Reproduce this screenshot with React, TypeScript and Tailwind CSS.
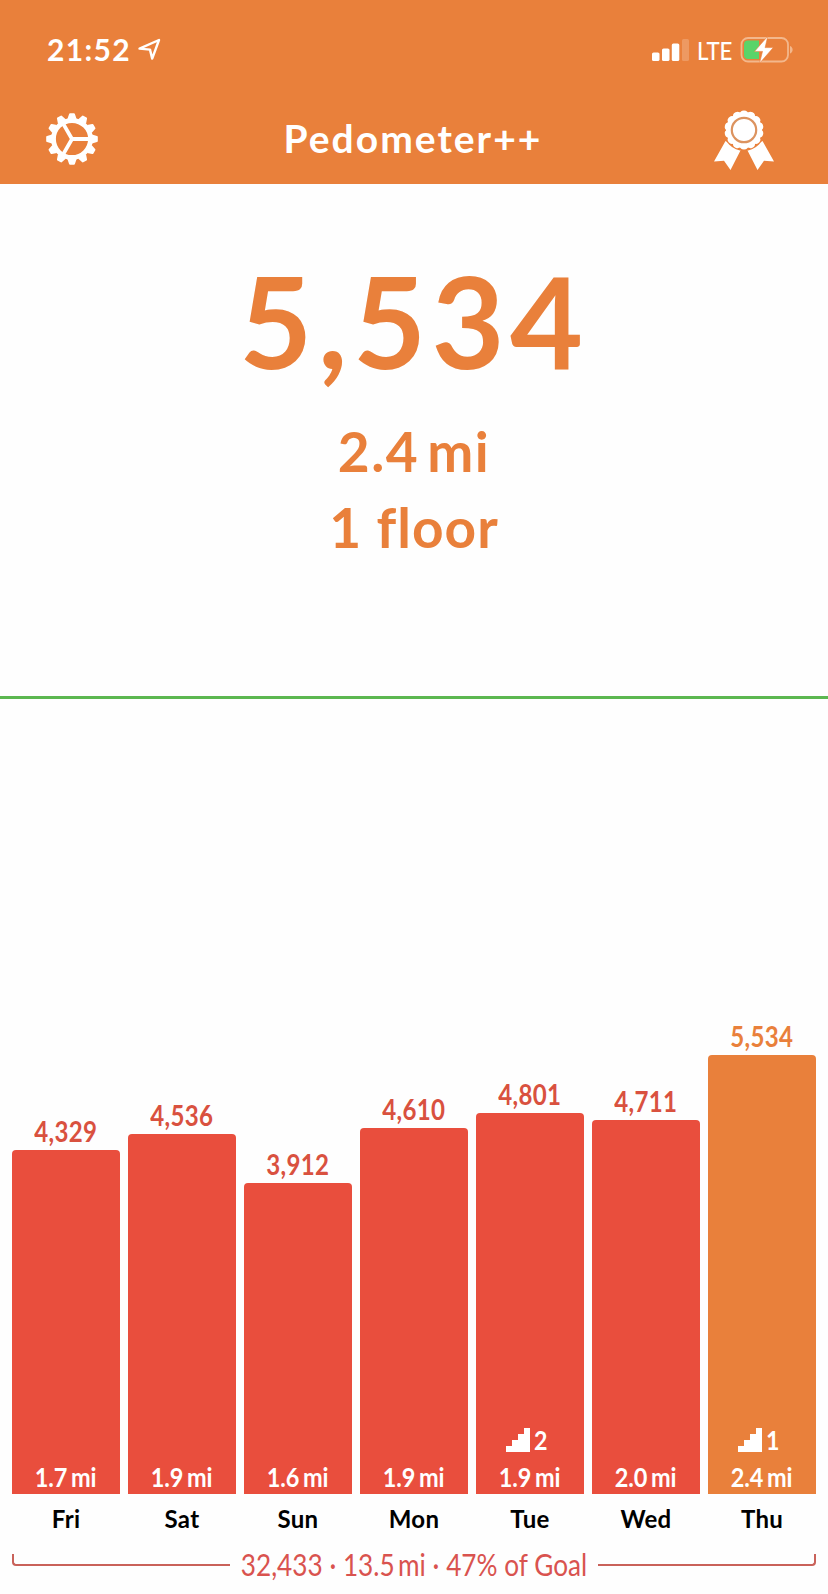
import clsx from "clsx";

type Day = {
  label: string;
  steps: number;
  miles: string;
  floors?: number;
  today?: boolean;
};

const PX_PER_STEP = 0.0794;

const days: Day[] = [
  { label: "Fri", steps: 4329, miles: "1.7" },
  { label: "Sat", steps: 4536, miles: "1.9" },
  { label: "Sun", steps: 3912, miles: "1.6" },
  { label: "Mon", steps: 4610, miles: "1.9" },
  { label: "Tue", steps: 4801, miles: "1.9", floors: 2 },
  { label: "Wed", steps: 4711, miles: "2.0" },
  { label: "Thu", steps: 5534, miles: "2.4", floors: 1, today: true },
];

const format = (value: number) => value.toLocaleString("en-US");

function LocationIcon() {
  return (
    <svg width="24" height="24" viewBox="0 0 24 24" fill="none">
      <path
        d="M2.500 10.600 22 2 15.200 20.600 13 11.600Z"
        stroke="white"
        strokeWidth="2.400"
        strokeLinejoin="round"
      />
    </svg>
  );
}

function SignalIcon() {
  return (
    <svg width="37" height="24" viewBox="0 0 37 24" fill="white">
      <rect x="0" y="14.500" width="7.500" height="8.500" rx="1.600" />
      <rect x="10" y="10.500" width="7.500" height="12.500" rx="1.600" />
      <rect x="19.800" y="5.500" width="7.500" height="17.500" rx="1.600" />
      <rect x="30" y="1" width="7" height="22" rx="1.600" opacity="0.200" />
    </svg>
  );
}

function BatteryIcon() {
  return (
    <svg width="54" height="28" viewBox="0 0 54 28" fill="none">
      <rect x="1.500" y="2" width="46.500" height="23.500" rx="6.500" stroke="#f3b78c" strokeWidth="1.800" />
      <path d="M50 10v7.500c1.600-.6 2.600-2 2.600-3.750S51.600 10.600 50 10Z" fill="#f3b78c" />
      <path d="M8 4.500H19V23H8a4 4 0 0 1-4-4V8.500a4 4 0 0 1 4-4Z" fill="#5ad469" />
      <path
        d="M27.800.2 14.500 15.400h8L19.500 27.300 33.300 11.600h-8.200Z"
        fill="white"
        stroke="#e9803b"
        strokeWidth="0.600"
      />
    </svg>
  );
}

function GearIcon() {
  return (
    <svg width="52" height="52" viewBox="-26 -26 52 52" fill="none">
      {Array.from({ length: 12 }).map((_, index) => (
        <path
          key={index}
          d="M-4.600-20-2.900-25q.2-.8 1-.8h3.800q.8 0 1 .8L4.600-20Z"
          fill="white"
          transform={`rotate(${index * 30})`}
        />
      ))}
      <circle r="18.500" stroke="white" strokeWidth="4.800" />
      <path d="M0 0H18M0 0-9-15.600M0 0-9 15.600" stroke="white" strokeWidth="3.800" />
    </svg>
  );
}

function AwardIcon() {
  return (
    <svg width="60" height="64" viewBox="0 -3 60 64">
      <path d="M11.500 31 0 51.500l10-.8 6.500 9.300L27 39.500Z" fill="white" />
      <path d="M48.500 31 60 51.500l-10-.8L43.500 60 33 39.500Z" fill="white" />
      <circle cx="30" cy="20" r="20.800" fill="#e9803b" />
      {Array.from({ length: 14 }).map((_, index) => (
        <circle
          key={index}
          cx="30"
          cy="4.500"
          r="4.100"
          fill="white"
          transform={`rotate(${(index * 360) / 14} 30 20)`}
        />
      ))}
      <circle cx="30" cy="20" r="18" fill="white" />
      <circle cx="30" cy="20" r="12.200" fill="none" stroke="#dc935f" strokeWidth="2.200" />
    </svg>
  );
}

function StairsIcon() {
  return (
    <svg width="24" height="24" viewBox="0 0 24 24" fill="white">
      <path d="M0 24v-6h6v-6h6V6h6V0h6v24Z" />
    </svg>
  );
}

function Bar({ day }: { day: Day }) {
  return (
    <div className="flex w-[108px] flex-col items-center">
      <p
        className={clsx(
          "scale-x-[0.86] pb-[3px] text-[28px] leading-8 font-bold tracking-[0.4px]",
          day.today ? "text-[#e9803b]" : "text-[#d9513f]"
        )}
      >
        {format(day.steps)}
      </p>
      <div
        className={clsx(
          "flex w-full flex-col items-center justify-end rounded-t-[4px] text-white",
          day.today ? "bg-[#e9803b]" : "bg-[#e94e3d]"
        )}
        style={{ height: day.steps * PX_PER_STEP }}
      >
        {day.floors && (
          <div className="flex items-center gap-1 pr-2 pb-[2px]">
            <StairsIcon />
            <span className="-mr-1 origin-left scale-x-[0.86] text-[27px] leading-9 font-bold">
              {day.floors}
            </span>
          </div>
        )}
        <p className="flex scale-x-[0.87] gap-1 pb-[1px] text-[27px] leading-[33px] font-bold">
          <span>{day.miles}</span>
          <span>mi</span>
        </p>
      </div>
      <p className="pt-[7px] pb-[1px] text-2xl leading-9 font-bold tracking-[0.3px] text-black">
        {day.label}
      </p>
    </div>
  );
}

export default function App() {
  return (
    <main className="flex h-[1594px] w-[828px] flex-col overflow-hidden bg-[#fefefe] font-['Lato',sans-serif]">
      <header className="h-[184px] bg-[#e9803b] text-white">
        <div className="flex items-center justify-between pt-8 pr-[34px] pl-[47px]">
          <div className="flex items-center gap-[6px]">
            <span className="pb-[2px] text-[30px] leading-[34px] font-bold tracking-[1.3px]">
              21:52
            </span>
            <LocationIcon />
          </div>
          <div className="flex items-center">
            <SignalIcon />
            <span className="w-[51px] origin-left scale-x-[0.89] pl-[9px] text-[25px] leading-9 font-medium">
              LTE
            </span>
            <BatteryIcon />
          </div>
        </div>
        <div className="flex items-center justify-between pt-[39px] pr-[54px] pl-[46px]">
          <GearIcon />
          <h1 className="pb-[2px] pl-[14px] text-[39px] leading-[60px] font-bold tracking-[2px]">
            Pedometer++
          </h1>
          <AwardIcon />
        </div>
      </header>

      <section className="flex h-[512px] flex-col items-center pt-[62px] text-[#e9803b]">
        <p className="text-[126px] leading-[150px] font-bold tracking-[5.5px]">5,534</p>
        <p className="flex gap-2 pt-[17px] text-[55px] leading-[76px] font-bold tracking-[1.5px]">
          <span>2.4</span>
          <span>mi</span>
        </p>
        <p className="text-[55px] leading-[76px] font-bold tracking-[1px]">1 floor</p>
      </section>

      <hr className="h-[3px] border-0 bg-[#5cb750]" />

      <section className="flex flex-1 items-end gap-2 px-3">
        {days.map((day) => (
          <Bar key={day.label} day={day} />
        ))}
      </section>

      <footer className="flex h-14 px-3 text-[#d9534f]">
        <div className="mt-4 h-3 w-[218px] shrink-0 rounded-bl-[4px] border-b-2 border-l-2 border-[#c9625a]" />
        <p className="flex min-w-0 flex-1 justify-center text-[31px] leading-[52px] whitespace-nowrap">
          <span className="scale-x-[0.845]">
            32,433 · 13.5<span className="pl-1">mi</span> · 47% of Goal
          </span>
        </p>
        <div className="mt-4 h-3 w-[218px] shrink-0 rounded-br-[4px] border-r-2 border-b-2 border-[#c9625a]" />
      </footer>
    </main>
  );
}
